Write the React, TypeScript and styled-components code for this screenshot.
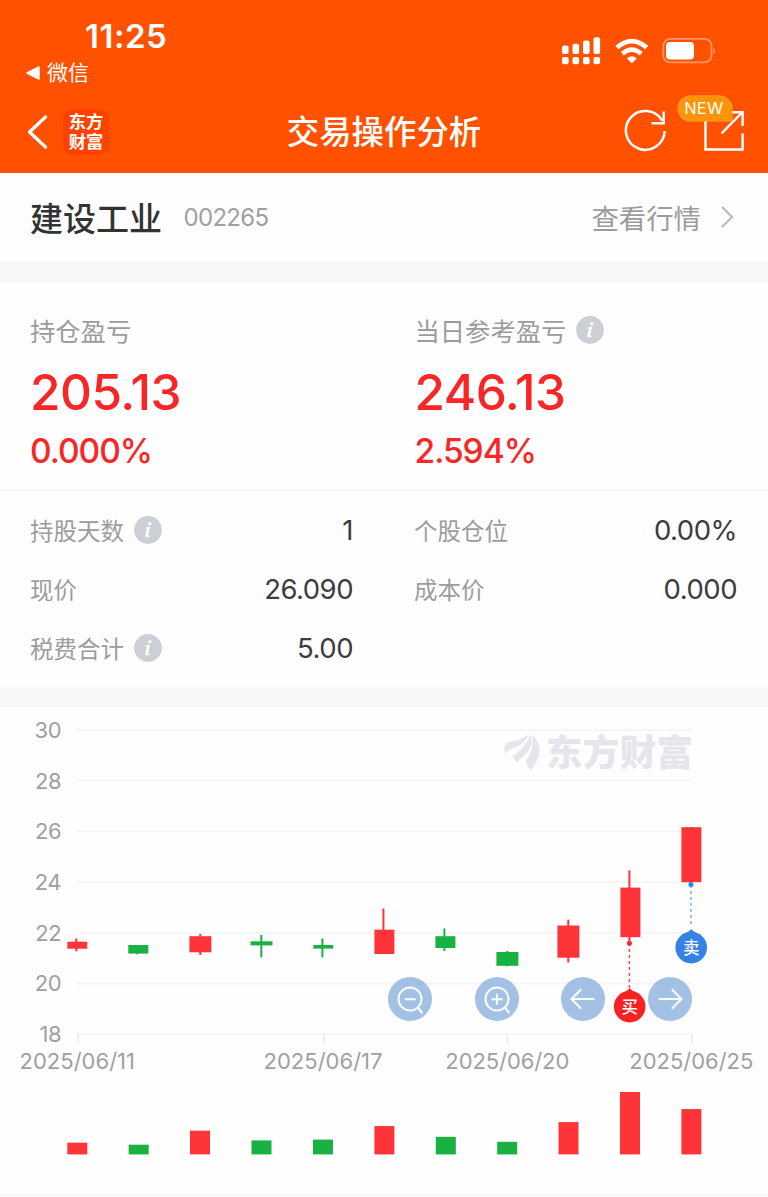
import React from "react";
import styled, { createGlobalStyle } from "styled-components";

const GlobalStyle = createGlobalStyle`
  * { box-sizing: border-box; }
  body {
    margin: 0;
    background: #fefefe;
    font-family: Inter, "Noto Sans CJK SC", sans-serif;
    -webkit-font-smoothing: antialiased;
  }
`;

const RISE = "#ff3439";
const FALL = "#19b142";

const Screen = styled.div`
  width: 768px;
  height: 1197px;
  overflow: hidden;
  display: flex;
  flex-direction: column;
`;

const Header = styled.header`
  height: 173px;
  flex: none;
  display: flex;
  flex-direction: column;
  background: #ff5100;
  color: #fff;
`;

const StatusBar = styled.div`
  height: 88px;
  display: flex;
  justify-content: space-between;
  padding: 0 51px 0 26px;
`;

const StatusLeft = styled.div`
  display: flex;
  flex-direction: column;
`;

const Clock = styled.div`
  height: 32px;
  margin: 20px 0 0 59px;
  font-size: 33px;
  line-height: 32px;
  font-weight: 600;
  letter-spacing: 0.5px;
`;

const BackToApp = styled.div`
  display: flex;
  align-items: center;
  gap: 7px;
  height: 42px;
  font-size: 21px;
  line-height: 42px;
`;

const StatusIcons = styled.div`
  display: flex;
  gap: 13.5px;
  height: 26px;
  margin-top: 36px;
`;

const NavBar = styled.div`
  height: 85px;
  display: grid;
  grid-template-columns: 200px 1fr 200px;
  align-items: center;
`;

const NavLeft = styled.div`
  display: flex;
  align-items: center;
  gap: 14px;
  padding-left: 26px;
`;

const AppLogo = styled.div`
  width: 46px;
  height: 46px;
  border-radius: 9px;
  background: #ff4200;
  display: grid;
  place-content: center;
  font-size: 17.3px;
  line-height: 19.5px;
  font-weight: 700;
`;

const Title = styled.h1`
  margin: 0;
  padding-top: 2px;
  text-align: center;
  font-size: 32.4px;
  line-height: 85px;
  font-weight: 500;
  white-space: nowrap;
`;

const NavRight = styled.div`
  position: relative;
  display: flex;
  justify-content: flex-end;
  padding: 0 23px 2px 0;
  gap: 34px;
`;

const NewBadge = styled.span`
  position: absolute;
  top: -12.5px;
  left: 109.5px;
  width: 54.5px;
  height: 25px;
  border-radius: 13px 13px 2px 13px;
  background: #ff9408;
  box-shadow: 0 0 0 0.5px #ffb04a;
  font-size: 16.5px;
  line-height: 25px;
  letter-spacing: 0.2px;
  padding-right: 2px;
  text-align: center;
`;

const StockBar = styled.section`
  height: 89px;
  flex: none;
  display: flex;
  align-items: center;
  padding: 0 34px 2px 30px;
`;

const StockName = styled.span`
  font-size: 33px;
  font-weight: 500;
  color: #333;
`;

const StockCode = styled.span`
  margin: 2px 0 0 21.5px;
  font-size: 24px;
  letter-spacing: -0.7px;
  color: #a0a0a0;
`;

const QuoteLink = styled.span`
  margin-left: auto;
  margin-right: 19px;
  font-size: 27.4px;
  font-weight: 400;
  color: #9c9c9c;
`;

const Divider = styled.div`
  height: 20px;
  flex: none;
  background: #f7f7f7;
`;

const Summary = styled.section`
  height: 209px;
  flex: none;
  display: grid;
  grid-template-columns: 384.5px 1fr;
  padding: 30px 0 0 30px;
  border-bottom: 2px solid #f5f5f5;
`;

const Label = styled.div<{ $size: number }>`
  display: flex;
  align-items: center;
  font-size: ${(p) => p.$size}px;
  line-height: 36px;
  font-weight: 400;
  color: #9c9c9c;
`;

const LabelText = styled.span`
  padding-top: 2px;
  margin-bottom: -2px;
`;

const Profit = styled.div`
  margin-top: 16px;
  height: 56px;
  font-size: 49.5px;
  line-height: 56px;
  font-weight: 500;
  letter-spacing: -0.5px;
  color: #f82626;
`;

const Percent = styled.div`
  margin-top: 13px;
  height: 36px;
  font-size: 33.5px;
  line-height: 36px;
  font-weight: 500;
  letter-spacing: -1px;
  color: #f82626;
`;

const Details = styled.section`
  height: 196px;
  flex: none;
  display: grid;
  grid-template-columns: 323px 323px;
  grid-auto-rows: 59px;
  column-gap: 61px;
  padding: 9px 0 0 30px;
`;

const DetailRow = styled.div`
  display: flex;
  align-items: center;
  justify-content: space-between;
`;

const Value = styled.span`
  font-size: 27.5px;
  letter-spacing: -0.5px;
  color: #3c3c3c;
`;

const ChartPanel = styled.section`
  position: relative;
  height: 490px;
  flex: none;
`;

const ChartSvg = styled.svg`
  display: block;
  font-family: Inter, "Noto Sans CJK SC", sans-serif;
`;

const ChartButton = styled.button<{ $x: number }>`
  position: absolute;
  left: ${(p) => p.$x}px;
  top: 269.5px;
  width: 44px;
  height: 44px;
  padding: 0;
  border: 0;
  border-radius: 50%;
  background: rgba(140, 178, 222, 0.8);
`;

const InfoSvg = styled.svg`
  display: block;
  margin-left: 10px;
`;

const InfoIcon = () => (
  <InfoSvg width="28" height="28" viewBox="0 0 28 28">
    <circle cx="14" cy="14" r="13.9" fill="#cccfd6" />
    <ellipse cx="15.8" cy="7.6" rx="1.8" ry="1.6" fill="#fff" />
    <path d="M11.4 12.4 Q13.6 12 15.4 11.2 L13.2 20.2 Q13.1 21.4 15.8 19.7" fill="none" stroke="#fff" strokeWidth="1.3" strokeLinejoin="round" />
    <path d="M14.2 12.5 L12.3 20.3" stroke="#fff" strokeWidth="2.2" strokeLinecap="round" />
  </InfoSvg>
);

const SignalIcon = () => (
  <svg width="40" height="30" viewBox="561 36 40 30" fill="#fff">
    {[562, 572.5, 583, 593.5].map((x, i) => {
      const top = [45.5, 43.8, 40.5, 37.2][i];
      return (
        <g key={x}>
          <rect x={x} y={top} width="6.6" height={54 - top} rx="2" />
          <rect x={x} y="57" width="6.6" height="7.2" rx="2" />
        </g>
      );
    })}
  </svg>
);

const WifiIcon = () => (
  <svg width="34" height="30" viewBox="614.5 36 34 30" fill="none" stroke="#fff" strokeWidth="4.6">
    <path d="M616.4 47.6 Q631.3 34.6 646.2 47.6" />
    <path d="M621.8 53.8 Q631.3 45.6 640.8 53.8" />
    <path d="M626.3 58.4 Q631.3 54 636.3 58.4 L631.3 63.2Z" fill="#fff" stroke="none" />
  </svg>
);

const BatteryIcon = () => (
  <svg width="55" height="30" viewBox="662 36 55 30">
    <rect x="663.3" y="38.8" width="48.2" height="23.6" rx="7" fill="none" stroke="#fff" strokeOpacity=".4" strokeWidth="1.8" />
    <rect x="666" y="42" width="28" height="17.6" rx="4" fill="#fff" />
    <path d="M713.6 47.4 Q716.4 50.8 713.6 54.4Z" fill="#fff" fillOpacity=".5" />
  </svg>
);

interface Bar {
  x: number;
  up: boolean;
  left: number;
  width: number;
  open: number;
  close: number;
  high: number;
  low: number;
  volume: number;
  volumeLeft: number;
}

const bar = (
  x: number, up: boolean, left: number, width: number,
  open: number, close: number, high: number, low: number,
  volumeLeft: number, volume: number,
): Bar => ({ x, up, left, width, open, close, high, low, volume, volumeLeft });

const BARS: Bar[] = [
  bar(76.3, true, 67.3, 20, 234.7, 241.7, 231.5, 244.3, 67.3, 11.7),
  bar(137.4, false, 128.3, 20, 238, 246.6, 238, 247.3, 128.7, 9.7),
  bar(200.3, true, 189.4, 22, 229.2, 245.3, 226.8, 248, 190, 23.7),
  bar(261.3, false, 250.5, 22, 234.3, 238.4, 228, 250.3, 251.5, 14),
  bar(322.4, false, 313.3, 20, 238, 241.6, 231.5, 250.3, 313, 14.8),
  bar(383.4, true, 374.4, 20, 222.7, 247, 201.5, 247, 374.4, 28.3),
  bar(444.4, false, 435.4, 20, 229.2, 241, 221.5, 244, 435.8, 17.6),
  bar(507.3, false, 496.4, 22, 245, 258.8, 244, 259.3, 497.2, 12.6),
  bar(568.3, true, 557.4, 22, 218.5, 250.7, 212.6, 255.5, 558.5, 32.3),
  bar(629.4, true, 620.4, 20, 180.6, 230.2, 163.3, 236, 620, 62.4),
  bar(691.3, true, 681.4, 20, 120.2, 175.2, 120.2, 175.2, 681.4, 45.3),
];

const PRICES = [30, 28, 26, 24, 22, 20, 18];
const gridY = (i: number) => 23 + i * 50.7;

const DATES = [
  { text: "2025/06/11", x: 19.5, width: 115.5, tick: 78 },
  { text: "2025/06/17", x: 263.5, width: 119, tick: 324.3 },
  { text: "2025/06/20", x: 445.3, width: 124, tick: 507.4 },
  { text: "2025/06/25", x: 629.3, width: 124, tick: 692 },
];

const Marker = ({ x, y, color, children }: { x: number; y: number; color: string; children: string }) => (
  <g transform={`translate(${x} ${y})`}>
    <circle r="15.8" fill={color} />
    <path d="M0 -18.3 Q3 -15 8 -13 H-8 Q-3 -15 0 -18.3Z" fill={color} />
    <text y="6" textAnchor="middle" fontSize="16.5" fontWeight="500" fill="#fff">{children}</text>
  </g>
);

const Chart = () => (
  <ChartSvg width="768" height="490" viewBox="0 0 768 490">
    {PRICES.map((price, i) => (
      <g key={price}>
        <line x1="77" x2="692" y1={gridY(i)} y2={gridY(i)} stroke="#f5f5f6" strokeWidth="1.8" />
        <text x="61.2" y={gridY(i) + 7.9} textAnchor="end" fontSize="22" letterSpacing="-0.4" fill="#a0a0a0">{price}</text>
      </g>
    ))}
    {DATES.map((d) => (
      <g key={d.text}>
        <line x1={d.tick} x2={d.tick} y1="327" y2="336.5" stroke="#ececee" strokeWidth="1.8" />
        <text x={d.x} y="361.6" fontSize="22" textLength={d.width} fill="#a0a0a0">{d.text}</text>
      </g>
    ))}
    <g fill="#e5e5eb">
      <path d="M504.8 46.5 Q502.8 38 508 35 Q520 34 528.5 27.2 Q526.5 34 519.5 38.5 Q510 41.5 504.8 46.5Z" />
      <path d="M512.5 49.5 Q522.5 42.5 526 36 Q529 32 530 27 Q533.5 36 528 45 Q521.5 50 517.2 56 Q514.5 53 512.5 49.5Z" />
      <path d="M526 53.5 Q534 43.5 532.2 27.2 Q541.5 37 539 48 Q536 57 531 63.5 Q526.5 59 526 53.5Z" />
      <text x="546" y="59" fontSize="36.5" fontWeight="900" textLength="147">东方财富</text>
    </g>
    {BARS.map((b) => (
      <g key={b.x} fill={b.up ? RISE : FALL}>
        <rect x={b.x - 1} y={b.high} width="2" height={b.low - b.high} />
        <rect x={b.left} y={b.open} width={b.width} height={b.close - b.open} />
        <rect x={b.volumeLeft} y={447.4 - b.volume} width="20" height={b.volume} />
      </g>
    ))}
    <line x1="0" x2="768" y1="488" y2="488" stroke="#f7f7f8" strokeWidth="2" />
  </ChartSvg>
);

const MarkerSvg = styled.svg`
  position: absolute;
  left: 0;
  top: 0;
  pointer-events: none;
  font-family: "Noto Sans CJK SC", sans-serif;
`;

const Markers = () => (
  <MarkerSvg width="768" height="490" viewBox="0 0 768 490">
    <line x1="629.4" x2="629.4" y1="236" y2="282" stroke="#fa4a4a" strokeWidth="1.5" strokeDasharray="3 3" />
    <circle cx="629.4" cy="236.3" r="2.5" fill="#f82626" />
    <line x1="690.9" x2="690.9" y1="178" y2="219" stroke="#7fb0ec" strokeWidth="1.5" strokeDasharray="3 3" />
    <circle cx="690.9" cy="177.5" r="2.5" fill="#3382e4" />
    <Marker x={629.7} y={299.6} color="#f82222">买</Marker>
    <Marker x={691.2} y={240.6} color="#3382e4">卖</Marker>
  </MarkerSvg>
);

const GLYPHS = {
  out: <><circle cx="22" cy="22" r="11.5" /><path d="M16.7 22.2H27.6M30.2 31L34.3 36" /></>,
  in: <><circle cx="22" cy="22" r="11.5" /><path d="M16.5 22.2H27.5M22 16.7V27.7M30.2 31L34.3 36" /></>,
  left: <path d="M33.3 22H11M20.2 12.3L10.5 22L20.2 31.7" />,
  right: <path d="M10.7 22H33M23.8 12.3L33.5 22L23.8 31.7" />,
};

const BUTTONS: { id: keyof typeof GLYPHS; x: number; label: string }[] = [
  { id: "out", x: 388, label: "缩小" },
  { id: "in", x: 474.6, label: "放大" },
  { id: "left", x: 561, label: "左移" },
  { id: "right", x: 647.7, label: "右移" },
];

const DETAILS = [
  { label: "持股天数", value: "1", info: true },
  { label: "个股仓位", value: "0.00%" },
  { label: "现价", value: "26.090" },
  { label: "成本价", value: "0.000" },
  { label: "税费合计", value: "5.00", info: true },
];

export default function App() {
  return (
    <Screen>
      <GlobalStyle />
      <Header>
        <StatusBar>
          <StatusLeft>
            <Clock>11:25</Clock>
            <BackToApp>
              <svg width="14" height="14" viewBox="0 0 14 14"><path d="M1 7L13 1V13Z" fill="#fff" stroke="#fff" strokeWidth="1.5" strokeLinejoin="round" /></svg>
              微信
            </BackToApp>
          </StatusLeft>
          <StatusIcons>
            <SignalIcon />
            <WifiIcon />
            <BatteryIcon />
          </StatusIcons>
        </StatusBar>
        <NavBar>
          <NavLeft>
            <svg width="23" height="36" viewBox="0 0 23 36"><path d="M19.5 3L3.5 18L19.5 33" fill="none" stroke="#fff" strokeWidth="3.3" strokeLinecap="round" strokeLinejoin="round" /></svg>
            <AppLogo><span>东方</span><span>财富</span></AppLogo>
          </NavLeft>
          <Title>交易操作分析</Title>
          <NavRight>
            <svg width="44" height="44" viewBox="623 108 44 44" fill="none" stroke="#fff" strokeWidth="2.5">
              <path d="M664.7 130A19.4 19.4 0 1 1 662 119.5" />
              <path d="M663.7 110.5V122.3H651.5" />
            </svg>
            <svg width="44" height="44" viewBox="701 108 44 44" fill="none" stroke="#fff" strokeWidth="2.5">
              <path d="M705.5 119V148.6H742.6V132.5M721.5 132.5L742 111.5M732 111.2H742.6V125" />
            </svg>
            <NewBadge>NEW</NewBadge>
          </NavRight>
        </NavBar>
      </Header>
      <StockBar>
        <StockName>建设工业</StockName>
        <StockCode>002265</StockCode>
        <QuoteLink>查看行情</QuoteLink>
        <svg width="14" height="24" viewBox="0 0 14 24"><path d="M2 2L12 12L2 22" fill="none" stroke="#bcbcbc" strokeWidth="2.2" /></svg>
      </StockBar>
      <Divider />
      <Summary>
        <div>
          <Label $size={25.3}><LabelText>持仓盈亏</LabelText></Label>
          <Profit>205.13</Profit>
          <Percent>0.000%</Percent>
        </div>
        <div>
          <Label $size={25.3}><LabelText>当日参考盈亏</LabelText><InfoIcon /></Label>
          <Profit>246.13</Profit>
          <Percent>2.594%</Percent>
        </div>
      </Summary>
      <Details>
        {DETAILS.map((d) => (
          <DetailRow key={d.label}>
            <Label $size={23.5}><LabelText>{d.label}</LabelText>{d.info && <InfoIcon />}</Label>
            <Value>{d.value}</Value>
          </DetailRow>
        ))}
      </Details>
      <Divider />
      <ChartPanel>
        <Chart />
        {BUTTONS.map((b) => (
          <ChartButton key={b.id} $x={b.x} aria-label={b.label}>
            <svg width="44" height="44" viewBox="0 0 44 44" fill="none" stroke="#fff" strokeWidth="2">{GLYPHS[b.id]}</svg>
          </ChartButton>
        ))}
        <Markers />
      </ChartPanel>
    </Screen>
  );
}
